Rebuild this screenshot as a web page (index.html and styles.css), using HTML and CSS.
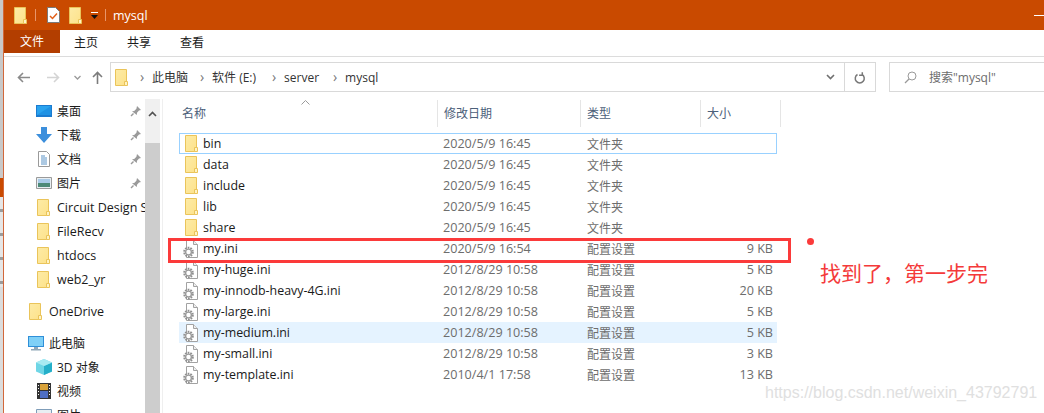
FILE: index.html
```html
<!DOCTYPE html>
<html lang="zh-CN">
  <head>
    <meta charset="UTF-8" />
    <title>mysql</title>
    <link rel="stylesheet" href="styles.css">
  </head>
  <body>
    <svg class="defs" width="0" height="0">
      <defs>
        <linearGradient id="folderfill" x1="0" y1="0" x2="1" y2="1">
          <stop offset="0" stop-color="#fdeba6"/>
          <stop offset="1" stop-color="#fde28a"/>
        </linearGradient>
      </defs>
      <symbol id="folder" viewBox="0 0 13 17">
        <path d="M.5.5h11v16H.5z" fill="url(#folderfill)" stroke="#eac45a"/>
        <path d="M9.500 16.500v-4h3v4z" fill="#fff3c4" stroke="#eac45a"/>
      </symbol>
      <symbol id="inifile" viewBox="0 0 15 18">
        <path d="M3.500.5h7l4 4v13h-11z" fill="#fff" stroke="#a2a2a2"/>
        <path d="M10.500.5v4h4" fill="#eee" stroke="#a2a2a2"/>
        <circle cx="5.500" cy="12" r="4.300" fill="#fff" stroke="#8f8f8f" stroke-width="2" stroke-dasharray="1.700 1"/>
        <circle cx="5.500" cy="12" r="2.900" fill="none" stroke="#9c9c9c" stroke-width="1.400"/>
      </symbol>
      <symbol id="pin" viewBox="0 0 12 12">
        <path d="M7 1l4 4-2 .6-2 2.200-.2 2.200L2 6.200l2.200-.2L6.400 3.800z" fill="#9a9a9a"/>
        <path d="M3.500 8.500L1 11" stroke="#9a9a9a" stroke-width="1.400"/>
      </symbol>
    </svg>

    <div class="desk-edge">
      <div class="edge-gray"></div>
      <div class="edge-orange"></div>
      <div class="edge-noise"></div>
    </div>

    <div class="window">
      <header class="titlebar">
        <svg class="qa-folder" width="13" height="17"><use href="#folder"/></svg>
        <span class="qa-sep"></span>
        <svg class="qa-doc" width="13" height="16" viewBox="0 0 13 16">
          <path d="M.5.5h8l4 4v11H.5z" fill="#fff" stroke="#7a7a7a"/>
          <path d="M3 9l2.500 2.500L10 6.500" fill="none" stroke="#e2601a" stroke-width="1.500"/>
        </svg>
        <svg class="qa-folder2" width="13" height="17"><use href="#folder"/></svg>
        <svg class="qa-drop" width="9" height="8" viewBox="0 0 9 8">
          <path d="M1 0h7v1H1z" fill="#fff"/>
          <path d="M1 3h7L4.500 7z" fill="#111"/>
        </svg>
        <span class="qa-sep qa-sep-last"></span>
        <span class="title-text">mysql</span>
        <span class="min-btn"></span>
      </header>

      <nav class="tabs">
        <span class="tab tab-file">文件</span>
        <span class="tab tab-home">主页</span>
        <span class="tab tab-share">共享</span>
        <span class="tab tab-view">查看</span>
      </nav>

      <div class="addressrow">
        <div class="navbtns">
          <svg width="13" height="11" viewBox="0 0 13 11"><path d="M6 1L1.500 5.500 6 10M2 5.500h11" fill="none" stroke="#8a8a8a" stroke-width="1.600"/></svg>
          <svg class="nav-fwd" width="13" height="11" viewBox="0 0 13 11"><path d="M7 1l4.500 4.500L7 10M11 5.500H0" fill="none" stroke="#d4d4d4" stroke-width="1.600"/></svg>
          <svg class="nav-recent" width="7" height="5" viewBox="0 0 7 5"><path d="M.5 1l3 3 3-3" fill="none" stroke="#9a9a9a" stroke-width="1.300"/></svg>
          <svg class="nav-up" width="11" height="13" viewBox="0 0 11 13"><path d="M1 6l4.500-4.500L10 6M5.500 2v11" fill="none" stroke="#7c7c7c" stroke-width="1.600"/></svg>
        </div>
        <div class="addressbar">
          <svg class="crumb-icon" width="13" height="17"><use href="#folder"/></svg>
          <span class="chev">›</span><span class="crumb">此电脑</span>
          <span class="chev">›</span><span class="crumb crumb-drive">软件 (E:)</span>
          <span class="chev">›</span><span class="crumb crumb-server">server</span>
          <span class="chev">›</span><span class="crumb">mysql</span>
          <svg class="addr-drop" width="9" height="6" viewBox="0 0 9 6"><path d="M1 1l3.500 3.500L8 1" fill="none" stroke="#707070" stroke-width="1.600"/></svg>
          <span class="refresh">
            <svg width="12" height="13" viewBox="0 0 12 13"><path d="M4 3.200a4.500 4.500 0 1 0 4.500 0M8.800 1v3H5.600" fill="none" stroke="#787878" stroke-width="1.500" transform="translate(-.5 .3)"/></svg>
          </span>
        </div>
        <div class="searchbox">
          <svg width="13" height="13" viewBox="0 0 13 13"><circle cx="8" cy="5" r="4" fill="none" stroke="#9a9a9a"/><path d="M5 8l-4 4" stroke="#9a9a9a" stroke-width="1.200"/></svg>
          <span>搜索"mysql"</span>
        </div>
      </div>

      <div class="content">
        <aside class="sidebar">
          <div class="side-tree">
            <div class="side-row">
              <svg class="side-icon" width="16" height="12" viewBox="0 0 16 12"><path d="M0 0h16v12H0z" fill="#1b7bd0"/><path d="M1 1h14v9H1z" fill="#2aa3ef"/><path d="M1 10L15 1v9z" fill="#1f92e4"/></svg>
              <span class="side-label">桌面</span>
              <svg class="pin" width="12" height="12"><use href="#pin"/></svg>
            </div>
            <div class="side-row">
              <svg class="side-icon" width="16" height="16" viewBox="0 0 16 16"><path d="M5 0h6v7h5l-8 9-8-9h5z" fill="#3c8fdc"/></svg>
              <span class="side-label">下载</span>
              <svg class="pin" width="12" height="12"><use href="#pin"/></svg>
            </div>
            <div class="side-row">
              <svg class="side-icon" width="16" height="16" viewBox="0 0 16 16"><path d="M2.500.5h8l3 3v12h-11z" fill="#fff" stroke="#9a9a9a"/><path d="M5 5h4M5 7h6M5 9h6M5 11h6M5 13h6" stroke="#5a93c6"/></svg>
              <span class="side-label">文档</span>
              <svg class="pin" width="12" height="12"><use href="#pin"/></svg>
            </div>
            <div class="side-row">
              <svg class="side-icon" width="16" height="12" viewBox="0 0 16 12"><path d="M.5.5h15v11H.5z" fill="#e8eef2" stroke="#9a9a9a"/><path d="M2 2h12v4H2z" fill="#a9cbe8"/><path d="M2 6h12v4H2z" fill="#4d8a78"/></svg>
              <span class="side-label">图片</span>
              <svg class="pin" width="12" height="12"><use href="#pin"/></svg>
            </div>
            <div class="side-row">
              <svg class="side-icon" width="13" height="17"><use href="#folder"/></svg>
              <span class="side-label side-latin">Circuit Design S</span>
            </div>
            <div class="side-row">
              <svg class="side-icon" width="13" height="17"><use href="#folder"/></svg>
              <span class="side-label side-latin">FileRecv</span>
            </div>
            <div class="side-row">
              <svg class="side-icon" width="13" height="17"><use href="#folder"/></svg>
              <span class="side-label side-latin">htdocs</span>
            </div>
            <div class="side-row">
              <svg class="side-icon" width="13" height="17"><use href="#folder"/></svg>
              <span class="side-label side-latin">web2_yr</span>
            </div>

            <div class="side-row side-top side-gap">
              <svg class="side-icon" width="13" height="17"><use href="#folder"/></svg>
              <span class="side-label side-latin">OneDrive</span>
            </div>

            <div class="side-row side-top side-gap">
              <svg class="side-icon" width="16" height="15" viewBox="0 0 16 15"><path d="M0 0h16v11H0z" fill="#2f8fd8"/><path d="M1 1h14v9H1z" fill="#7fd0f7"/><path d="M6 11h4v2H6zM3 13h10v1.500H3z" fill="#8fa7b8"/></svg>
              <span class="side-label">此电脑</span>
            </div>
            <div class="side-row">
              <svg class="side-icon" width="16" height="16" viewBox="0 0 16 16"><path d="M8 0l8 3.500v9L8 16l-8-3.500v-9z" fill="#6fd6e6"/><path d="M8 7l8-3.500v9L8 16z" fill="#25afc9"/><path d="M8 0l8 3.500L8 7 0 3.500z" fill="#a8eaf2"/></svg>
              <span class="side-label">3D 对象</span>
            </div>
            <div class="side-row">
              <svg class="side-icon" width="14" height="16" viewBox="0 0 14 16"><path d="M0 0h14v16H0z" fill="#333"/><path d="M3 1h8v6H3z" fill="#d8a23a"/><path d="M3 8h8v7H3z" fill="#4f6fc4"/><path d="M1 2h1v1H1zM1 5h1v1H1zM1 8h1v1H1zM1 11h1v1H1zM12 2h1v1h-1zM12 5h1v1h-1zM12 8h1v1h-1zM12 11h1v1h-1z" fill="#fff"/></svg>
              <span class="side-label">视频</span>
            </div>
            <div class="side-row">
              <svg class="side-icon" width="16" height="12" viewBox="0 0 16 12"><path d="M.5.5h15v11H.5z" fill="#e8eef2" stroke="#7f9db9"/></svg>
              <span class="side-label">图片</span>
            </div>
          </div>
          <div class="side-scroll">
            <div class="scroll-up">
              <svg width="9" height="6" viewBox="0 0 9 6"><path d="M1 5l3.500-3.500L8 5" fill="none" stroke="#505050" stroke-width="1.600"/></svg>
            </div>
            <div class="scroll-thumb"></div>
          </div>
        </aside>

        <section class="filelist">
          <div class="list-head">
            <span class="head-cell head-name">名称<svg class="sort-caret" width="9" height="5" viewBox="0 0 9 5"><path d="M.5 4.500l4-4 4 4" fill="none" stroke="#9a9a9a"/></svg></span>
            <span class="head-cell head-date">修改日期</span>
            <span class="head-cell head-type">类型</span>
            <span class="head-cell head-size">大小</span>
          </div>

          <div class="rows">
            <div class="row row-focus"><span class="name"><svg width="13" height="17"><use href="#folder"/></svg>bin</span><span>2020/5/9 16:45</span><span class="kind">文件夹</span><span></span></div>
            <div class="row"><span class="name"><svg width="13" height="17"><use href="#folder"/></svg>data</span><span>2020/5/9 16:45</span><span class="kind">文件夹</span><span></span></div>
            <div class="row"><span class="name"><svg width="13" height="17"><use href="#folder"/></svg>include</span><span>2020/5/9 16:45</span><span class="kind">文件夹</span><span></span></div>
            <div class="row"><span class="name"><svg width="13" height="17"><use href="#folder"/></svg>lib</span><span>2020/5/9 16:45</span><span class="kind">文件夹</span><span></span></div>
            <div class="row"><span class="name"><svg width="13" height="17"><use href="#folder"/></svg>share</span><span>2020/5/9 16:45</span><span class="kind">文件夹</span><span></span></div>
            <div class="row"><span class="name"><svg class="ini" width="15" height="18"><use href="#inifile"/></svg>my.ini</span><span>2020/5/9 16:54</span><span class="kind">配置设置</span><span class="size">9 KB</span></div>
            <div class="row"><span class="name"><svg class="ini" width="15" height="18"><use href="#inifile"/></svg>my-huge.ini</span><span>2012/8/29 10:58</span><span class="kind">配置设置</span><span class="size">5 KB</span></div>
            <div class="row"><span class="name"><svg class="ini" width="15" height="18"><use href="#inifile"/></svg>my-innodb-heavy-4G.ini</span><span>2012/8/29 10:58</span><span class="kind">配置设置</span><span class="size">20 KB</span></div>
            <div class="row"><span class="name"><svg class="ini" width="15" height="18"><use href="#inifile"/></svg>my-large.ini</span><span>2012/8/29 10:58</span><span class="kind">配置设置</span><span class="size">5 KB</span></div>
            <div class="row row-hover"><span class="name"><svg class="ini" width="15" height="18"><use href="#inifile"/></svg>my-medium.ini</span><span>2012/8/29 10:58</span><span class="kind">配置设置</span><span class="size">5 KB</span></div>
            <div class="row"><span class="name"><svg class="ini" width="15" height="18"><use href="#inifile"/></svg>my-small.ini</span><span>2012/8/29 10:58</span><span class="kind">配置设置</span><span class="size">3 KB</span></div>
            <div class="row"><span class="name"><svg class="ini" width="15" height="18"><use href="#inifile"/></svg>my-template.ini</span><span>2010/4/1 17:58</span><span class="kind">配置设置</span><span class="size">13 KB</span></div>
          </div>
        </section>
      </div>
    </div>

    <!-- annotations drawn over the screenshot -->
    <div class="mark-box"></div>
    <div class="mark-dot"></div>
    <div class="mark-text">找到了，第一步完</div>
    <div class="watermark">https://blog.csdn.net/weixin_43792791</div>
  </body>
</html>
```

FILE: styles.css
```css
body {
  margin: 0;
  width: 1044px;
  height: 413px;
  display: flex;
  overflow: hidden;
  position: relative;
  background: #fff;
  font-family: "Open Sans", "Noto Sans CJK SC", sans-serif;
  font-size: 12px;
  color: #1a1a1a;
}

.defs {
  position: absolute;
}

svg {
  display: block;
  flex: none;
}

/* bit of the desktop showing on the left */
.desk-edge {
  width: 3px;
  flex: none;
  display: flex;
  flex-direction: column;
  background: #dcdcdc;
}

.edge-gray {
  height: 178px;
  background: #c9c9c9;
}

.edge-orange {
  height: 19px;
  background: #c94a00;
}

.edge-noise {
  height: 90px;
  background: repeating-linear-gradient(#e6e6e6 0 12px, #9c9c9c 12px 15px, #e6e6e6 15px 24px);
}

.window {
  flex: 1;
  min-width: 0;
  height: 413px;
  overflow: hidden;
  border-left: 1px solid #d2683a;
  display: flex;
  flex-direction: column;
}

.titlebar {
  height: 30px;
  flex: none;
  background: #c94a00;
  display: flex;
  align-items: center;
  color: #fff;
}

.qa-folder {
  margin-left: 10px;
}

.qa-sep {
  width: 1px;
  height: 12px;
  margin-left: 8px;
  background: #e8956a;
}

.qa-doc {
  margin-left: 11px;
}

.qa-folder2 {
  margin-left: 9px;
}

.qa-drop {
  margin-left: 8px;
  margin-top: 2px;
}

.qa-sep-last {
  margin-left: 6px;
}

.title-text {
  margin-left: 7px;
  font-size: 12.500px;
}

.min-btn {
  width: 10px;
  height: 1px;
  background: #fff;
  margin-left: auto;
}

.tabs {
  height: 23px;
  flex: none;
  display: flex;
  align-items: center;
  border-bottom: 1px solid #dcdcdc;
  margin-bottom: 5px;
  padding-bottom: 3px;
}

.tab {
  text-align: center;
}

.tab-file {
  width: 56px;
  height: 23px;
  line-height: 23px;
  background: #b33e00;
  color: #fff;
}

.tab-home {
  margin-left: 14px;
}

.tab-share {
  margin-left: 29px;
}

.tab-view {
  margin-left: 29px;
}

.addressrow {
  height: 30px;
  flex: none;
  display: flex;
  align-items: center;
}

.navbtns {
  width: 106px;
  flex: none;
  display: flex;
  align-items: center;
  padding-left: 13px;
  box-sizing: border-box;
}

.nav-fwd {
  margin-left: 17px;
}

.nav-recent {
  margin-left: 14px;
}

.nav-up {
  margin-left: 11px;
}

.addressbar {
  width: 766px;
  height: 30px;
  flex: none;
  box-sizing: border-box;
  border: 1px solid #d9d9d9;
  display: flex;
  align-items: center;
  color: #333;
}

.crumb-icon {
  margin-left: 4px;
  margin-right: 2px;
}

.chev {
  width: 24px;
  text-align: center;
  color: #777;
  font-size: 14px;
  line-height: 14px;
  margin-right: -2px;
}

.crumb {
  margin-right: 2px;
}

.crumb-drive {
  margin-right: 6px;
}

.crumb-server {
  margin-right: 4px;
}

.addr-drop {
  margin-left: auto;
  margin-right: 9px;
}

.refresh {
  width: 30px;
  height: 28px;
  border-left: 1px solid #d9d9d9;
  display: flex;
  align-items: center;
  justify-content: center;
}

.searchbox {
  margin-left: 13px;
  flex: 1;
  height: 30px;
  box-sizing: border-box;
  border: 1px solid #d9d9d9;
  border-right: 0;
  display: flex;
  align-items: center;
  padding-left: 14px;
  gap: 12px;
  color: #6d6d6d;
}

.content {
  flex: 1;
  min-height: 0;
  display: flex;
  margin-top: 7px;
}

.sidebar {
  width: 158px;
  flex: none;
  display: flex;
  border-right: 1px solid #efefef;
}

.side-tree {
  width: 141px;
  flex: none;
  overflow: hidden;
}

.side-row {
  height: 24px;
  display: flex;
  align-items: center;
  padding-left: 32px;
  position: relative;
  white-space: nowrap;
}

.side-top {
  padding-left: 24px;
}

.side-gap {
  margin-top: 8px;
}

.side-icon {
  margin-right: 5px;
}

.side-row .side-icon[width="13"] {
  margin-left: 1px;
  margin-right: 7px;
}

.side-row .side-icon[width="14"] {
  margin-left: 1px;
  margin-right: 6px;
}

.side-latin {
  font-size: 12.500px;
}

.pin {
  position: absolute;
  left: 126px;
  top: 6px;
}

.side-scroll {
  width: 15px;
  flex: none;
  background: #f0f0f0;
}

.scroll-up {
  height: 44px;
  padding-top: 12px;
  box-sizing: border-box;
  display: flex;
  justify-content: center;
}

.scroll-thumb {
  height: 270px;
  background: #cdcdcd;
}

.filelist {
  flex: 1;
  min-width: 0;
  padding-left: 2px;
}

.list-head {
  display: flex;
  height: 27px;
  margin-top: 1px;
  margin-left: 11px;
  color: #4c607a;
}

.head-cell {
  box-sizing: border-box;
  height: 27px;
  line-height: 27px;
  padding-left: 6px;
  border-right: 1px solid #e5e5e5;
  position: relative;
}

.head-name {
  width: 262px;
}

.head-date {
  width: 143px;
}

.head-type {
  width: 120px;
}

.head-size {
  width: 80px;
}

.sort-caret {
  position: absolute;
  left: 125px;
  top: 0;
}

.rows {
  margin-top: 6px;
  margin-left: 14px;
  width: 598px;
}

.row {
  box-sizing: border-box;
  height: 21px;
  display: grid;
  grid-template-columns: 263px 144px 100px 1fr;
  align-items: center;
  border: 1px solid transparent;
  color: #6d6d6d;
  font-size: 12.600px;
  white-space: nowrap;
}

.row-focus {
  border-color: #99d1ff;
}

.row-hover {
  background: #e5f3ff;
}

.kind {
  font-size: 12px;
}

.name {
  display: flex;
  align-items: center;
  color: #1a1a1a;
  font-size: 12.400px;
  padding-left: 5px;
}

.name svg {
  margin-right: 5px;
}

.name svg.ini {
  margin-left: -2px;
  margin-right: 5px;
}

.size {
  text-align: right;
  padding-right: 3px;
}

/* red notes on top */
.mark-box {
  position: absolute;
  left: 168px;
  top: 238px;
  width: 617px;
  height: 19px;
  border: 3px solid #fb3a3a;
}

.mark-dot {
  position: absolute;
  left: 807px;
  top: 238px;
  width: 7px;
  height: 7px;
  border-radius: 50%;
  background: #fb3a3a;
}

.mark-text {
  position: absolute;
  left: 820px;
  top: 258px;
  font-size: 21px;
  line-height: 30px;
  color: #f43a3a;
  white-space: nowrap;
}

.watermark {
  position: absolute;
  left: 765px;
  top: 382px;
  font-family: "Liberation Sans", sans-serif;
  font-size: 16px;
  line-height: 21px;
  color: #e0e0e0;
  white-space: nowrap;
}
```
